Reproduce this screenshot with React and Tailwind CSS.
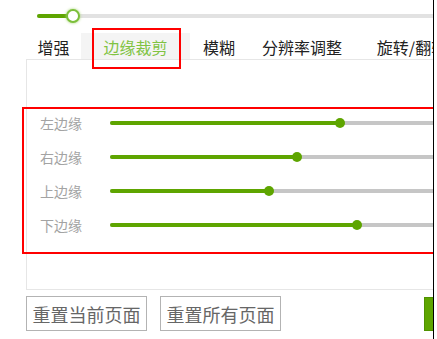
import React from "react";

const font = { fontFamily: '"Noto Sans CJK SC", "Microsoft YaHei", sans-serif' };

const tabs = [
  { label: "增强", w: "w-[55px]" },
  { label: "边缘裁剪", w: "w-[109px]", active: true },
  { label: "模糊", w: "w-[58px]" },
  { label: "分辨率调整", w: "w-[108px]" },
  { label: "旋转/翻转", w: "w-[112px]" },
];

const rows = [
  { label: "左边缘", v: 230 },
  { label: "右边缘", v: 187 },
  { label: "上边缘", v: 159 },
  { label: "下边缘", v: 247 },
];

function Row({ label, v }) {
  return (
    <div className="flex h-[34px] items-center pl-[13px]">
      <div className="w-[70px] shrink-0 text-[14px] leading-none text-[#a3a3a3]">{label}</div>
      <div className="relative h-[4px] w-[420px] shrink-0 rounded-full bg-[#c6c6c6]">
        <div className="absolute left-0 top-0 h-[4px] rounded-full bg-[#5ea500]" style={{ width: v }} />
        <div
          className="absolute top-[-3px] h-[10px] w-[10px] rounded-full bg-[#5ea500]"
          style={{ left: v - 5 }}
        />
      </div>
    </div>
  );
}

export default function App() {
  return (
    <div className="flex h-[339px] w-[437px] overflow-hidden bg-white" style={font}>
      <div className="relative h-full w-[433px] shrink-0 overflow-hidden">
        <div className="w-[640px]">
          {/* top slider */}
          <div className="flex h-8 items-center pl-[37px]">
            <div className="relative h-[4px] w-[560px] rounded-full bg-[#e2e2e2]">
              <div className="absolute left-0 top-0 h-[4px] w-[36px] rounded-full bg-[#5ea500]" />
              <div className="absolute left-[29px] top-[-5px] h-[14px] w-[14px] rounded-full border-2 border-[#7cbf3a] bg-white shadow-[0_0_3px_#9fd36a]" />
            </div>
          </div>
          {/* tabs */}
          <div className="mt-px flex h-[26px] pl-[26px]">
            {tabs.map((t) => (
              <div
                key={t.label}
                className={`${t.w} flex shrink-0 items-center justify-center pt-[2px] text-[16px] leading-none ${
                  t.active ? "bg-[#f4f4f4] text-[#80c342]" : "text-[#222]"
                }`}
              >
                {t.label}
              </div>
            ))}
          </div>
          {/* panel */}
          <div className="ml-[26px] h-[231px] w-[600px] border border-[#e6e6e6] pt-[46px]">
            {rows.map((r) => (
              <Row key={r.label} {...r} />
            ))}
          </div>
          {/* buttons */}
          <div className="mt-[6px] flex items-start pl-[26px]">
            <button className="h-[35px] w-[121px] border border-[#b3b3b3] bg-white text-[18px] leading-none text-[#666]">
              重置当前页面
            </button>
            <button className="ml-[13px] h-[35px] w-[121px] border border-[#b3b3b3] bg-white text-[18px] leading-none text-[#666]">
              重置所有页面
            </button>
            <div className="ml-[143px] mt-px h-[34px] w-[80px] border border-[#4f9200] bg-[#5ea500]" />
          </div>
        </div>
        {/* annotation boxes */}
        <div className="pointer-events-none absolute left-[92px] top-[28px] h-[41px] w-[89px] border-2 border-[#ff0000]" />
        <div className="pointer-events-none absolute left-[22px] top-[107px] h-[147px] w-[500px] border-2 border-[#ff0000]" />
      </div>
      <div className="h-full w-px shrink-0 bg-black" />
      <div className="h-full flex-1 bg-white" />
    </div>
  );
}
